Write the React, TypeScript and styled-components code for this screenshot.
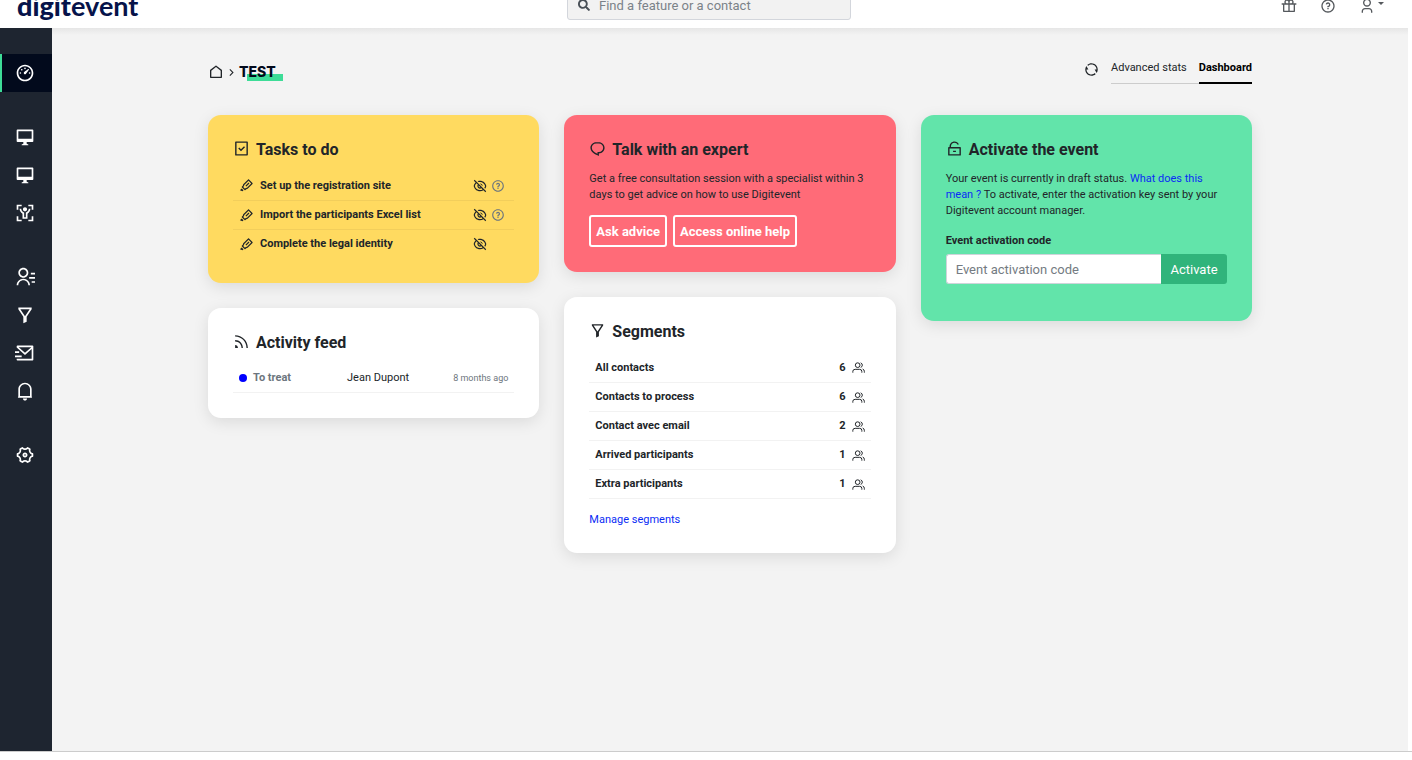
import React from "react";
import styled, { createGlobalStyle, css } from "styled-components";
import {
  RiArrowRightSLine,
  RiBodyScanLine,
  RiChat1Line,
  RiContactsLine,
  RiDashboard3Line,
  RiEyeOffLine,
  RiFilter2Line,
  RiGiftLine,
  RiHomeLine,
  RiLockUnlockLine,
  RiMacLine,
  RiMailSendLine,
  RiMarkPenLine,
  RiNotification4Line,
  RiQuestionLine,
  RiRefreshLine,
  RiRssLine,
  RiSettings4Line,
  RiTaskLine,
  RiUser3Line,
} from "react-icons/ri";
import { FaSearch } from "react-icons/fa";

const GlobalStyle = createGlobalStyle`
  *, *::before, *::after { box-sizing: border-box; }
  body {
    margin: 0;
    background: #fff;
    color: #212529;
    font-family: Roboto, "Liberation Sans", sans-serif;
    font-size: 11px;
    line-height: 16px;
  }
  h1, h2, p, ul, ol { margin: 0; padding: 0; }
  ul, ol { list-style: none; }
  a { color: #0b2cf5; text-decoration: none; }
  button, input { font-family: inherit; }
  svg { display: block; flex: none; }
`;

const Page = styled.div`
  min-height: 100vh;
  display: flex;
  flex-direction: column;
`;

const Header = styled.header`
  height: 28px;
  overflow: hidden;
  display: flex;
  align-items: flex-end;
  background: #fff;
`;

const HeaderBar = styled.div`
  flex: 1;
  height: 46px;
  padding: 0 11px 0 17px;
  display: grid;
  grid-template-columns: 1fr 284px 1fr;
  align-items: center;
`;

const Logo = styled.a`
  padding-top: 2px;
  color: #06134a;
  font-family: Lato, sans-serif;
  font-size: 27px;
  line-height: 32px;
  font-weight: 900;
`;

const LogoLight = styled.span`
  font-weight: 700;
`;

const Search = styled.label`
  height: 30px;
  padding: 0 10px;
  display: flex;
  align-items: center;
  gap: 9px;
  background: #f2f2f2;
  border: 1px solid #d3d6dc;
  border-radius: 3px;
  color: #495057;
`;

const SearchInput = styled.input`
  flex: 1;
  min-width: 0;
  border: 0;
  padding: 0;
  background: transparent;
  font-size: 13px;
  outline: none;
  &::placeholder { color: #7b8289; opacity: 1; }
`;

const HeaderActions = styled.div`
  padding: 1px 17px 0 0;
  display: flex;
  justify-content: flex-end;
  gap: 23px;
`;

const IconButton = styled.button`
  display: flex;
  align-items: center;
  gap: 3px;
  padding: 0;
  border: 0;
  background: none;
  color: inherit;
  cursor: pointer;
`;

const HeaderButton = styled(IconButton)`
  color: #55595d;
`;

const HelpButton = styled(IconButton)`
  color: #6c757d;
`;

const Caret = styled.span`
  margin-bottom: 4px;
  border: 3px solid transparent;
  border-top-color: currentColor;
  border-bottom: 0;
`;

const Body = styled.div`
  flex: 1;
  display: flex;
  margin-right: 4px;
`;

const Sidebar = styled.nav`
  width: 52px;
  padding-top: 26px;
  display: flex;
  flex-direction: column;
  gap: 26px;
  background: #1e2530;
`;

const NavItem = styled.a<{ $active?: boolean }>`
  height: 38px;
  padding-right: 2px;
  display: flex;
  align-items: center;
  justify-content: center;
  color: #fff;
  ${(p) =>
    p.$active &&
    css`
      background: #020a1c;
      box-shadow: inset 2px 0 #3ddc97;
    `}
`;

const Main = styled.main`
  flex: 1;
  min-width: 0;
  padding: 30px 24px;
  background: #f3f3f3 linear-gradient(#e6e6e6, #f3f3f3) 0 0 / 100% 7px no-repeat;
`;

const Container = styled.div`
  max-width: 1044px;
  margin: 0 auto;
`;

const TitleBar = styled.div`
  height: 57px;
  display: flex;
  align-items: flex-start;
  justify-content: space-between;
`;

const Breadcrumb = styled.ol`
  height: 28px;
  display: flex;
  align-items: center;
  gap: 1px;
`;

const PageTitle = styled.h1`
  padding-right: 7px;
  color: #020a1c;
  background: linear-gradient(#3ddc97, #3ddc97) 8px 11px / 100% 7px no-repeat;
  font-family: Inter, sans-serif;
  font-size: 14px;
  line-height: 18px;
  font-weight: 800;
`;

const Tools = styled.div`
  display: flex;
  align-items: flex-start;
  gap: 12px;
`;

const RefreshButton = styled(IconButton)`
  height: 22px;
`;

const Tabs = styled.ul`
  display: flex;
`;

const Tab = styled.a<{ $active?: boolean }>`
  height: 26px;
  padding-top: 2px;
  padding-right: ${(p) => (p.$active ? 0 : 12)}px;
  display: block;
  color: ${(p) => (p.$active ? "#000" : "#212529")};
  font-weight: ${(p) => (p.$active ? 700 : 400)};
  border-bottom: ${(p) => (p.$active ? "2px solid #000" : "1px solid #ccc")};
`;

const Columns = styled.div`
  display: grid;
  grid-template-columns: repeat(3, 1fr);
  gap: 25px;
  align-items: start;
`;

const Column = styled.div`
  display: grid;
  gap: 25px;
`;

const Card = styled.section<{ $color?: string }>`
  padding: 25px;
  border-radius: 13px;
  background: ${(p) => p.$color || "#fff"};
  box-shadow: 0 4px 16px rgba(0, 0, 0, 0.1);
`;

const CardTitle = styled.h2`
  margin-bottom: 11px;
  display: flex;
  align-items: center;
  gap: 6px;
  font-size: 16px;
  line-height: 20px;
  font-weight: 700;
  svg { margin-bottom: 3px; }
`;

const Table = styled.table`
  width: 100%;
  border-collapse: collapse;
`;

const Cell = styled.td<{ $width?: number; $muted?: boolean; $right?: boolean }>`
  width: ${(p) => (p.$width ? p.$width + "px" : "auto")};
  height: 29px;
  padding: 1px 6px 0;
  font-weight: 700;
  text-align: ${(p) => (p.$right ? "right" : "left")};
  color: ${(p) => (p.$muted ? "#6c757d" : "inherit")};
`;

const Row = styled.tr`
  border-bottom: 1px solid rgba(0, 0, 0, 0.05);
`;

const TaskRow = styled(Row)`
  &:last-child { border-bottom: 0; }
`;

const FeedRow = styled(Row)`
  ${Cell} { height: 28px; padding-top: 0; }
`;

const Line = styled.div<{ $gap: number; $end?: boolean }>`
  display: flex;
  align-items: center;
  justify-content: ${(p) => (p.$end ? "flex-end" : "flex-start")};
  gap: ${(p) => p.$gap}px;
`;

const Dot = styled.span`
  width: 8px;
  height: 8px;
  border-radius: 50%;
  background: #00f;
`;

const Plain = styled.span`
  font-weight: 400;
`;

const Small = styled.small`
  font-size: 9px;
  font-weight: 400;
  color: #6c757d;
`;

const ButtonRow = styled.div`
  margin-top: 12px;
  display: flex;
  gap: 6px;
`;

const OutlineButton = styled.button`
  height: 32px;
  padding: 0 5px;
  border: 2px solid #fff;
  border-radius: 3px;
  background: none;
  color: #fff;
  font-size: 13px;
  font-weight: 700;
`;

const MoreLink = styled.a`
  margin-top: 13px;
  display: block;
`;

const Field = styled.form`
  margin: 14px 0 12px;
`;

const FieldLabel = styled.label`
  margin-bottom: 5px;
  display: block;
  font-weight: 700;
`;

const InputGroup = styled.div`
  height: 30px;
  display: flex;
`;

const CodeInput = styled.input`
  flex: 1;
  min-width: 0;
  padding: 0 9px;
  border: 1px solid #ced4da;
  border-right: 0;
  border-radius: 3px 0 0 3px;
  font-size: 13px;
  &::placeholder { color: #747b82; opacity: 1; }
`;

const SubmitButton = styled.button`
  width: 66px;
  padding: 0;
  border: 0;
  border-radius: 0 3px 3px 0;
  background: #30b47b;
  color: #fff;
  font-size: 13px;
`;

const Footer = styled.footer`
  height: 9px;
  border-top: 1px solid #ccc;
  background: #fff;
`;

const PeopleIcon = () => (
  <svg width="13" height="11" viewBox="0 0 39 33" fill="none" stroke="currentColor" strokeWidth="3">
    <circle cx="17" cy="9.5" r="7" />
    <path d="M26 2.500q5 2 5 7t-5 7M2.500 32v-4q0-6 7-6h13q7 0 7 6v4M32 21q5 2 5 7v4" />
  </svg>
);

const navGroups = [
  [{ label: "Dashboard", Icon: RiDashboard3Line, active: true }],
  [
    { label: "Website", Icon: RiMacLine },
    { label: "Registration site", Icon: RiMacLine },
    { label: "Check-in", Icon: RiBodyScanLine },
  ],
  [
    { label: "Contacts", Icon: RiContactsLine },
    { label: "Segments", Icon: RiFilter2Line },
    { label: "Campaigns", Icon: RiMailSendLine },
    { label: "Notifications", Icon: RiNotification4Line },
  ],
  [{ label: "Settings", Icon: RiSettings4Line }],
];

const tasks = [
  { label: "Set up the registration site", help: true },
  { label: "Import the participants Excel list", help: true },
  { label: "Complete the legal identity", help: false },
];

const segments = [
  { label: "All contacts", count: 6 },
  { label: "Contacts to process", count: 6 },
  { label: "Contact avec email", count: 2 },
  { label: "Arrived participants", count: 1 },
  { label: "Extra participants", count: 1 },
];

export default function App() {
  return (
    <Page>
      <GlobalStyle />
      <Header>
        <HeaderBar>
          <Logo href="#">digit<LogoLight>event</LogoLight></Logo>
          <Search>
            <FaSearch size={12} />
            <SearchInput type="text" aria-label="Search" placeholder="Find a feature or a contact" />
          </Search>
          <HeaderActions>
            <HeaderButton aria-label="Gifts"><RiGiftLine size={16} /></HeaderButton>
            <HeaderButton aria-label="Help"><RiQuestionLine size={16} /></HeaderButton>
            <HeaderButton aria-label="Account">
              <RiUser3Line size={16} />
              <Caret />
            </HeaderButton>
          </HeaderActions>
        </HeaderBar>
      </Header>
      <Body>
        <Sidebar>
          {navGroups.map((group, i) => (
            <ul key={i}>
              {group.map(({ label, Icon, active }: any) => (
                <li key={label}>
                  <NavItem href="#" aria-label={label} $active={active}>
                    <Icon size={20} />
                  </NavItem>
                </li>
              ))}
            </ul>
          ))}
        </Sidebar>
        <Main>
          <Container>
            <TitleBar>
              <Breadcrumb>
                <li><RiHomeLine size={16} /></li>
                <li><RiArrowRightSLine size={13} /></li>
                <li><PageTitle>TEST</PageTitle></li>
              </Breadcrumb>
              <Tools>
                <RefreshButton aria-label="Refresh"><RiRefreshLine size={15} /></RefreshButton>
                <Tabs>
                  <li><Tab href="#">Advanced stats</Tab></li>
                  <li><Tab href="#" $active>Dashboard</Tab></li>
                </Tabs>
              </Tools>
            </TitleBar>
            <Columns>
              <Column>
                <Card $color="#ffda60">
                  <CardTitle><RiTaskLine size={17} />Tasks to do</CardTitle>
                  <Table>
                    <tbody>
                      {tasks.map((task) => (
                        <TaskRow key={task.label}>
                          <Cell>
                            <Line $gap={6}><RiMarkPenLine size={15} />{task.label}</Line>
                          </Cell>
                          <Cell $width={47}>
                            <Line $gap={4}>
                              <IconButton aria-label="Hide"><RiEyeOffLine size={14} /></IconButton>
                              {task.help && (
                                <HelpButton aria-label="Help"><RiQuestionLine size={14} /></HelpButton>
                              )}
                            </Line>
                          </Cell>
                        </TaskRow>
                      ))}
                    </tbody>
                  </Table>
                </Card>
                <Card>
                  <CardTitle><RiRssLine size={17} />Activity feed</CardTitle>
                  <Table>
                    <tbody>
                      <FeedRow>
                        <Cell $width={108} $muted><Line $gap={6}><Dot />To treat</Line></Cell>
                        <Cell><Plain>Jean Dupont</Plain></Cell>
                        <Cell $right><Small>8 months ago</Small></Cell>
                      </FeedRow>
                    </tbody>
                  </Table>
                </Card>
              </Column>
              <Column>
                <Card $color="#ff6b78">
                  <CardTitle><RiChat1Line size={17} />Talk with an expert</CardTitle>
                  <p>
                    Get a free consultation session with a specialist within 3 days to get advice on how to use
                    Digitevent
                  </p>
                  <ButtonRow>
                    <OutlineButton>Ask advice</OutlineButton>
                    <OutlineButton>Access online help</OutlineButton>
                  </ButtonRow>
                </Card>
                <Card>
                  <CardTitle><RiFilter2Line size={17} />Segments</CardTitle>
                  <Table>
                    <tbody>
                      {segments.map((s) => (
                        <Row key={s.label}>
                          <Cell>{s.label}</Cell>
                          <Cell $width={60}>
                            <Line $gap={6} $end>{s.count}<PeopleIcon /></Line>
                          </Cell>
                        </Row>
                      ))}
                    </tbody>
                  </Table>
                  <MoreLink href="#">Manage segments</MoreLink>
                </Card>
              </Column>
              <Column>
                <Card $color="#62e4aa">
                  <CardTitle><RiLockUnlockLine size={17} />Activate the event</CardTitle>
                  <p>
                    Your event is currently in draft status. <a href="#">What does this mean ?</a> To activate, enter
                    the activation key sent by your Digitevent account manager.
                  </p>
                  <Field>
                    <FieldLabel htmlFor="code">Event activation code</FieldLabel>
                    <InputGroup>
                      <CodeInput id="code" type="text" placeholder="Event activation code" />
                      <SubmitButton type="button">Activate</SubmitButton>
                    </InputGroup>
                  </Field>
                </Card>
              </Column>
            </Columns>
          </Container>
        </Main>
      </Body>
      <Footer />
    </Page>
  );
}
